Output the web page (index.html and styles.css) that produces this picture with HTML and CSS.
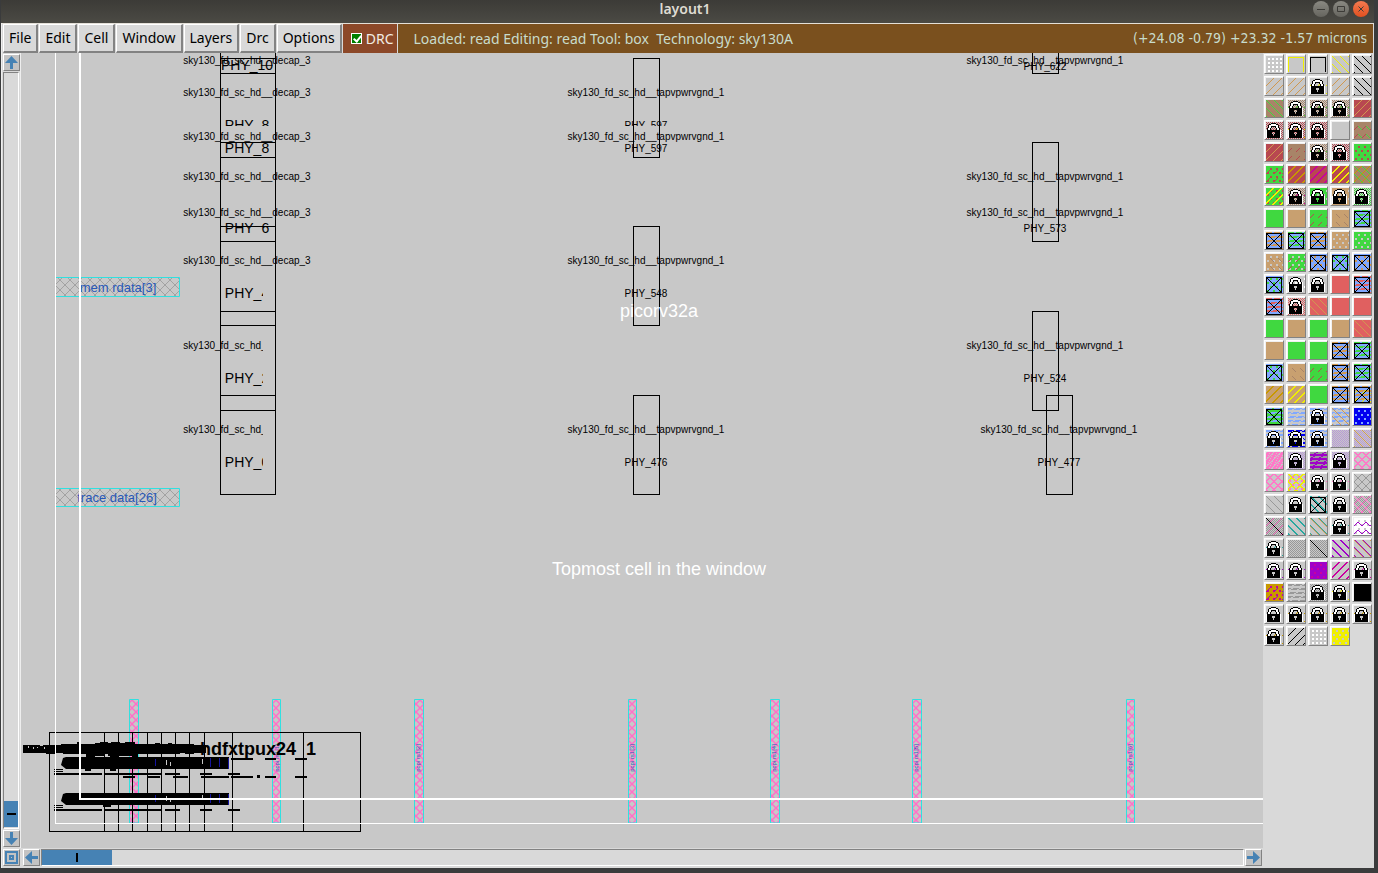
FILE: index.html
```
<!DOCTYPE html>
<html lang="en">
<head>
<meta charset="utf-8">
<title>layout1</title>
<link rel="stylesheet" href="styles.css">
</head>
<body>
<div class="window">
  <header class="titlebar">
    <span class="titlebar-side"></span>
    <h1 class="title">layout1</h1>
    <div class="titlebar-side window-controls">
      <button class="wm" aria-label="Minimize"><svg width="16" height="16" viewBox="0 0 16 16"><path d="M4 8.500h8"/></svg></button>
      <button class="wm" aria-label="Maximize"><svg width="16" height="16" viewBox="0 0 16 16"><path d="M4.500 5.500h7v5h-7z"/></svg></button>
      <button class="wm wm-close" aria-label="Close"><svg width="16" height="16" viewBox="0 0 16 16"><path d="M5.500 5.500l5 5m0-5l-5 5"/></svg></button>
    </div>
  </header>
  <div class="content">
    <nav class="menubar">
      <button class="menu">File</button>
      <button class="menu">Edit</button>
      <button class="menu">Cell</button>
      <button class="menu">Window</button>
      <button class="menu">Layers</button>
      <button class="menu">Drc</button>
      <button class="menu">Options</button>
      <label class="drc"><input class="drc-check" type="checkbox" checked>DRC</label>
      <div class="status">
        <span class="status-text">Loaded: read Editing: read Tool: box&nbsp; Technology: sky130A</span>
        <span class="status-text readout">(+24.08 -0.79) +23.32 -1.57 microns</span>
      </div>
    </nav>
    <main class="workspace">
      <div class="vscroll">
        <button class="arrow" aria-label="Scroll up"><svg width="15" height="15" viewBox="0 0 15 15"><path d="M7.500 1L14 8H9v6H6V8H1z"/></svg></button>
        <div class="trough trough-v"><div class="thumb thumb-v"></div></div>
        <button class="arrow" aria-label="Scroll down"><svg width="15" height="15" viewBox="0 0 15 15"><path d="M7.500 14L14 7H9V1H6v6H1z"/></svg></button>
      </div>
      <svg class="canvas" role="img" aria-label="Layout view">
        <defs>
          <pattern id="cross-gray" width="10" height="10" patternUnits="userSpaceOnUse"><path d="M0 0l10 10M10 0L0 10" stroke="#a2a2a2" fill="none"/></pattern>
          <pattern id="cross-pink" width="8" height="8" patternUnits="userSpaceOnUse"><path d="M0 0l8 8M8 0L0 8" stroke="#ff70c8" stroke-width="1.500" fill="none"/></pattern>
          <clipPath id="clip-left"><path d="M100 50h163v450H100z"/></clipPath>
          <clipPath id="clip-upper"><path d="M100 50h1000v76H100z"/></clipPath>
          <clipPath id="clip-phy6"><path d="M100 200h200v33H100z"/></clipPath>
        </defs>
        <g transform="translate(-21 -53)">
          <g class="pin">
            <path fill="url(#cross-gray)" d="M55.500 277.500h124v19h-124zM55.500 488.500h124v18h-124z"/>
          </g>
          <g class="pin">
            <path fill="url(#cross-pink)" d="M129.500 699.500h9V823h-9zM272.500 699.500h8V823h-8zM414.500 699.500h9V823h-9zM628.500 699.500h8V823h-8zM770.500 699.500h9V823h-9zM912.500 699.500h9V823h-9zM1126.500 699.500h8V823h-8z"/>
          </g>
          <g class="pin-label">
            <text x="118" y="292">mem rdata[3]</text>
            <text x="117" y="502">trace data[26]</text>
          </g>
          <g class="pin-tiny">
            <text transform="translate(279 758) rotate(-90)">pcpi rs1[1]</text>
            <text transform="translate(420 758) rotate(-90)">pcpi rs1[2]</text>
            <text transform="translate(634 758) rotate(-90)">pcpi rs1[3]</text>
            <text transform="translate(776 758) rotate(-90)">pcpi rs1[4]</text>
            <text transform="translate(918 758) rotate(-90)">pcpi rs1[5]</text>
            <text transform="translate(1132 758) rotate(-90)">pcpi rs1[6]</text>
          </g>
          <path class="cell-line" d="M220.500 53V494.500M275.500 53V494.500M220 58.500h55M220 73.500h55M220 142.500h55M220 157.500h55M220 226.500h55M220 241.500h55M220 311.500h55M220 325.500h55M220 395.500h55M220 410.500h55M220 494.500h55
            M633.500 58.500h26v99h-26zM633.500 226.500h26v99h-26zM633.500 395.500h26v99h-26z
            M1032.500 43.500h26v30h-26zM1032.500 142.500h26v99h-26zM1032.500 311.500h26v99h-26zM1046.500 395.500h26v99h-26z
            M49.500 732.500h311v99h-311zM104.500 732v99M118.500 732v99M132.500 732v99M147.500 732v99M161.500 732v99M175.500 732v99M189.500 732v99M204.500 732v99M232.500 732v99M303.500 732v99"/>
          <g class="cell-type">
            <text x="247" y="64">sky130_fd_sc_hd__decap_3</text>
            <text x="247" y="96">sky130_fd_sc_hd__decap_3</text>
            <text x="247" y="140">sky130_fd_sc_hd__decap_3</text>
            <text x="247" y="180">sky130_fd_sc_hd__decap_3</text>
            <text x="247" y="216">sky130_fd_sc_hd__decap_3</text>
            <text x="247" y="264">sky130_fd_sc_hd__decap_3</text>
            <g clip-path="url(#clip-left)">
              <text x="247" y="349">sky130_fd_sc_hd__decap_3</text>
              <text x="247" y="433">sky130_fd_sc_hd__decap_3</text>
            </g>
            <text x="646" y="96">sky130_fd_sc_hd__tapvpwrvgnd_1</text>
            <text x="646" y="140">sky130_fd_sc_hd__tapvpwrvgnd_1</text>
            <text x="646" y="264">sky130_fd_sc_hd__tapvpwrvgnd_1</text>
            <text x="646" y="433">sky130_fd_sc_hd__tapvpwrvgnd_1</text>
            <text x="1045" y="64">sky130_fd_sc_hd__tapvpwrvgnd_1</text>
            <text x="1045" y="180">sky130_fd_sc_hd__tapvpwrvgnd_1</text>
            <text x="1045" y="216">sky130_fd_sc_hd__tapvpwrvgnd_1</text>
            <text x="1045" y="349">sky130_fd_sc_hd__tapvpwrvgnd_1</text>
            <text x="1059" y="433">sky130_fd_sc_hd__tapvpwrvgnd_1</text>
            <g clip-path="url(#clip-upper)"><text x="646" y="129">PHY_597</text></g>
            <text x="646" y="152">PHY_597</text>
            <text x="646" y="297">PHY_548</text>
            <text x="646" y="466">PHY_476</text>
            <text x="1045" y="70">PHY_622</text>
            <text x="1045" y="232">PHY_573</text>
            <text x="1045" y="382">PHY_524</text>
            <text x="1059" y="466">PHY_477</text>
          </g>
          <g class="cell-name">
            <text x="247" y="70">PHY_10</text>
            <g clip-path="url(#clip-upper)"><text x="247" y="130">PHY_8</text></g>
            <text x="247" y="153">PHY_8</text>
            <g clip-path="url(#clip-phy6)"><text x="247" y="233">PHY_6</text></g>
            <g clip-path="url(#clip-left)">
              <text x="247" y="298">PHY_4</text>
              <text x="247" y="383">PHY_2</text>
              <text x="247" y="467">PHY_0</text>
            </g>
          </g>
          <g class="pile">
            <path d="M23 745h17v1h3v-1h18v-1h16v-2h2v2h16v-1h5v-1h8v1h3v-1h9v1h5v-1h10v2h20v-1h5v1h8v-1h4v1h22v1h12v8h-12v1h-9v-1h-5v1H63v-1h-8v1h-9v-1H23zM66 757h163v12H66l-5-4 2-7zM66 793h163v12H66l-5-4 2-7z"/>
            <path d="M86 754h18v2h4v-2h30v3h-6v-1h-14v1h-8v-1H95v1h-9zM85 769h6v2h-6zM110 769h6v2h-6zM103 805h8v2h-8z"/>
            <path d="M231 758h22v2h-22zM265 758h11v2h-11zM295 758h12v2h-12zM54 773h48v2H54zM105 773h57v2h-57zM165 773h15v2h-15zM200 773h12v2h-12zM228 773h12v2h-12zM123 776h12v2h-12zM148 776h12v2h-12zM173 776h15v2h-15zM201 776h28v2h-28zM231 776h22v2h-22zM257 775h3v3h-3zM265 776h11v2h-11zM295 776h12v2h-12zM54 809h48v2H54zM105 809h57v2h-57zM165 809h15v2h-15zM200 809h12v2h-12zM228 809h12v2h-12zM54 769h9v1h-9zM54 771h9v1h-9zM54 805h9v1h-9zM54 807h9v1h-9z"/>
            <text class="pile-text" x="296" y="755">hdfxtpux24</text>
            <text class="pile-text" x="316" y="755">1</text>
            <path fill="#c8c8c8" d="M28 746h1v2h-1zM33 747h1v2h-1zM37 747h1v1h-1zM44 747h1v2h-1zM166 760h1v5h-1zM170 762h1v4h-1zM202 759h1v5h-1zM166 796h1v5h-1zM170 798h1v4h-1zM202 795h1v5h-1z"/>
            <path fill="#1414a0" d="M155 759h1v7h-1zM210 758h1v9h-1zM219 758h1v9h-1zM228 758h1v11h-1zM155 795h1v7h-1zM210 794h1v9h-1zM219 794h1v9h-1zM228 794h1v11h-1z"/>
          </g>
          <path class="edit-box" d="M55 53h1v770h1208v1H55zM79 53h2v745h1182v2H79z"/>
          <g class="caption">
            <text x="659" y="317">picorv32a</text>
            <text x="659" y="575">Topmost cell in the window</text>
          </g>
        </g>
      </svg>
      <aside class="palette" id="palette" aria-label="Layers"></aside>
      <button class="arrow arrow-zoom" aria-label="Fit view"><svg width="15" height="15" viewBox="0 0 15 15"><path fill-rule="evenodd" d="M1 1h13v13H1zM3 3v9h9V3zM5 5h5v5H5zM7 7v1h1V7z"/></svg></button>
      <div class="hscroll">
        <button class="arrow" aria-label="Scroll left"><svg width="15" height="15" viewBox="0 0 15 15"><path d="M1 7.500L8 1v5h6v3H8v5z"/></svg></button>
        <div class="trough trough-h"><div class="thumb thumb-h"></div></div>
        <button class="arrow" aria-label="Scroll right"><svg width="15" height="15" viewBox="0 0 15 15"><path d="M14 7.500L7 1v5H1v3h6v5z"/></svg></button>
      </div>
    </main>
  </div>
</div>
<script src="palette.js"></script>
</body>
</html>
```
FILE: palette.js
```
// Each swatch: background colour code, then fill patterns as <pattern><colour>.
const COLORS = {
  '.': '#c8c8c8', g: '#40d840', t: '#d09850', b: '#a88468', r: '#b84850', R: '#e06060',
  y: '#f0f000', o: '#c89800', m: '#c800a0', p: '#ff78c8', v: '#a000c8', l: '#80a8ff',
  B: '#0000f0', w: '#ffffff', k: '#000000', c: '#28a8a0', a: '#989898', s: '#b898d8'
};
const BACKGROUNDS = { ...COLORS, t: '#c8a070' };

const ROWS = [
  ['. dw', '. fy', '. fk', '. \\y', '. \\k'],
  ['. /t', '. /t', '. -y L', '. /t', '. \\k'],
  ['b \\g', '. #b -g L', '. #b -g L', '. #b -g L', 'r /t'],
  ['. #r L', '. #r -y L', '. #r L', '.', 'b -r ~g'],
  ['r /t', 'b -r', '. #b -g L', '. #r L', 'g er'],
  ['g er -r', 'r ]o', 'r ]m', 'r ]y', 'b /o \\g'],
  ['g er ]y', '. #b -m L', 'g e. L', 't e. L', '. #g L'],
  ['g', 't', 'g -r', 't ~b', 'l hg X'],
  ['l ht X', 'l hg X', 'l ht X', 't e.', 'g e.'],
  ['t e. ~b', 'g e. -r', 'l et X', 'l eg X', 'l et X'],
  ['l eg X', '. ew L', '. L', 'R', 'l hR X'],
  ['l hR X', '. #R L', 'R \\t', 'R', 'R'],
  ['g', 't', 'g', 't', 'R \\t'],
  ['t', 'g', 'g', 'l ht X', 'l hg X'],
  ['l eg X', 't ~b', 'g -r', 'l ht X', 'l hg X'],
  ['t ]o', 't ]y', 'g', 'l ht X', 'l ht -y X'],
  ['g hl X', '. hl', '. hl L', '. hl \\t', 'B el'],
  ['. hl L', '. hB L', '. hl L', '. #s', '. #s \\t'],
  ['p n.', '. #s L', 'v ha', '. #s L', '. zp'],
  ['. zp', '. zy ep', '. -p L', '. -p L', '. xa'],
  ['. \\t \\a', '. L', '. [c X', '. L', '. #a xp'],
  ['. #a /p 1k', '. [c', '. [c \\t', '. -c L', 'w e. ~v -v'],
  ['. -c L', '. #a', '. #a 1k', '. [v', '. [v \\t'],
  ['. -v L', '. -v L', 'v em', '. ]m', '. -m L'],
  ['o em -v', '. ha', '. #a L', '. -y L', 'k'],
  ['. L', '. -o L', '. -o L', '. -o L', '. -o L'],
  ['. -o L', '. /k', '. dw', 'y e.']
];

const LOCK = [
  '',
  '.....KKKKK.......',
  '...KKWWWWWKK.....',
  '..KWWWWWWWWWK....',
  '..KWWKKKKKWWK....',
  '..KWWK...KWWK....',
  '.KWWK.....KWWK...',
  '.KWWK.....KWWK...',
  'WKKKKKKKKKKKKKW..',
  'WKKKKKKKKKKKKKW..',
  'WKKKKK...KKKKKW..',
  'WKKKKK...KKKKKW..',
  'WKKKKKK.KKKKKKW..',
  'WKKKKKK.KKKKKKW..',
  'WKKKKKKKKKKKKKW..',
  'WKKKKKKKKKKKKKW..',
  ''
];

const PATTERNS = {
  d: (x, y) => x % 4 > 1 && y % 4 > 1 && x < 16 && y < 16,
  e: (x, y) => (x + (y >> 2) % 2 * 3) % 6 > 3 && y % 4 > 1,
  '/': (x, y) => (x + y) % 8 === 7,
  '\\': (x, y) => (x - y + 32) % 8 === 0,
  ']': (x, y) => (x + y) % 8 > 5,
  '[': (x, y) => (x - y + 32) % 8 < 2,
  '-': (x, y) => (x + y) % 8 === 7 && x % 8 < 4,
  '~': (x, y) => (x - y + 32) % 8 === 0 && y % 8 > 3,
  '1': (x, y) => x === y,
  x: (x, y) => (x + y) % 8 === 7 || (x - y + 32) % 8 === 0,
  z: (x, y) => (x + y) % 8 > 5 || (x - y + 32) % 8 < 2,
  '#': (x, y) => (x + y) % 2 === 0,
  h: (x, y) => y % 4 < 2 && (x + (y >> 2) * 3 + y % 2 * 2) % 8 < 6,
  n: (x, y) => (x * x * 3 + y * y * 5 + x * y) % 7 < 1,
  f: (x, y) => (y === 1 && x < 16) || ((x === 0 || x === 15) && y > 0 && y < 16),
  X: (x, y) => y > 0 && x < 16 && (y === 1 || y === 16 || x === 0 || x === 15 || x === y - 1 || x + y === 16)
};

function pixels(test, color) {
  let d = '';
  for (let y = 0; y < 17; y++) for (let x = 0; x < 17; x++) if (test(x, y)) d += `M${x} ${y}h1v1h-1z`;
  return `<path fill="${color}" d="${d}"/>`;
}

function swatch(spec) {
  const [bg, ...layers] = spec.split(' ');
  let out = `<path fill="${BACKGROUNDS[bg]}" d="M0 0h17v17H0z"/>`;
  for (const layer of layers) {
    if (layer === 'L') {
      out += pixels((x, y) => LOCK[y][x] === 'K', '#000') + pixels((x, y) => LOCK[y][x] === 'W', '#fff');
    } else {
      out += pixels(PATTERNS[layer[0]], layer === 'X' ? '#000' : COLORS[layer[1]]);
    }
  }
  return `<svg width="17" height="17" viewBox="0 0 17 17" shape-rendering="crispEdges">${out}</svg>`;
}

document.getElementById('palette').innerHTML = ROWS.flat()
  .map((spec, i) => `<button class="swatch" aria-label="Layer ${i + 1}">${swatch(spec)}</button>`)
  .join('');
```
FILE: styles.css
```
* { box-sizing: border-box; }
html, body { height: 100%; }
body { margin: 0; background: #3a3b3c; font-family: "Noto Sans", "Open Sans", sans-serif; font-size: 14px; color: #000; }
button { margin: 0; padding: 0; border: 0; font: inherit; color: inherit; }
svg { display: block; }

.window { display: flex; flex-direction: column; height: 100vh; padding: 0 4px 5px 1px; }
.titlebar { display: flex; align-items: center; height: 23px; flex: none; background: linear-gradient(#3c3b37, #4b4a44); }
.titlebar-side { flex: 1; }
.title { margin: 0; padding-bottom: 6px; font-size: 14px; line-height: 17px; font-weight: 600; color: #dfdbd2; }
.window-controls { display: flex; justify-content: flex-end; gap: 4px; padding: 0 5px 5px 0; }
.wm { width: 16px; height: 16px; border-radius: 50%; background: linear-gradient(#8a8982, #66655f); }
.wm path { fill: none; stroke: #3c3b37; }
.wm-close { background: linear-gradient(#f47a50, #e05020); }

.content { display: flex; flex-direction: column; flex: 1; min-height: 0; background: #d9d9d9; border-left: 1px solid #eee; }
.menubar { display: flex; height: 30px; flex: none; gap: 1px; padding-left: 1px; border-top: 1px solid #e4e0d8; background: #d9d9d9; }
.menu { padding: 0 5px 1px; background: #d9d9d9; border: 1px solid #fff; border-right: 2px solid #828282; border-bottom: 2px solid #828282; line-height: 19px; }
.drc { display: flex; align-items: center; gap: 4px; padding: 0 3px 1px 8px; background: #8c4828; color: #f2ece4; }
.drc-check { appearance: none; width: 11px; height: 11px; margin: 0; border: 1px solid #fff; background: #008000; position: relative; }
.drc-check:checked::after { content: ""; position: absolute; left: 3px; top: 0; width: 3px; height: 6px; border: solid #fff; border-width: 0 2px 2px 0; transform: rotate(40deg); }
.status { display: flex; flex: 1; align-items: center; justify-content: space-between; margin-right: 1px; padding: 0 6px 1px 16px; background: #7a501e; color: #c8dccc; white-space: nowrap; }
.readout { font-family: "DejaVu Sans Condensed", "Noto Sans", sans-serif; }

.workspace { display: grid; flex: 1; min-height: 0; grid-template-columns: 19px 1fr 111px; grid-template-rows: 1fr 20px; }
.vscroll { display: flex; flex-direction: column; align-items: center; gap: 1px; padding: 1px; border-right: 1px solid #eee; }
.hscroll { display: flex; align-items: flex-start; gap: 1px; padding: 1px 1px 0 2px; }
.arrow { flex: none; width: 17px; height: 17px; border: 1px solid #fff; border-right-color: #828282; border-bottom-color: #828282; background: #c3c3c3; }
.arrow path { fill: #4682b4; }
.arrow-zoom { grid-column: 1; grid-row: 2; margin: 1px; }
.hscroll { grid-column: 2; grid-row: 2; }
.trough { display: flex; flex: 1; border: 1px solid #828282; border-right-color: #fff; border-bottom-color: #fff; background: #d9d9d9; }
.trough-v { flex-direction: column; justify-content: flex-end; width: 16px; padding-bottom: 1px; }
.trough-h { height: 17px; }
.thumb { display: flex; align-items: center; justify-content: center; background: #4682b4; }
.thumb-v { height: 26px; }
.thumb-h { width: 70px; }
.thumb::after { content: ""; background: #000; }
.thumb-v::after { width: 9px; height: 2px; }
.thumb-h::after { width: 2px; height: 9px; }

.canvas { width: 100%; height: 100%; min-width: 0; overflow: hidden; background: #c8c8c8; font-family: "Liberation Sans", Arial, sans-serif; }
.canvas text { text-anchor: middle; }
.pin { stroke: #30e0e0; }
.pin-label { font-size: 13px; fill: #2858b8; }
.pin-tiny { font-size: 6px; fill: #2858b8; }
.cell-line { fill: none; stroke: #000; shape-rendering: crispEdges; }
.cell-type { font-size: 10px; fill: #000; }
.cell-name { font-size: 14px; }
.canvas .pile-text { font-size: 18px; font-weight: 700; text-anchor: end; }
.edit-box { fill: #fff; fill-rule: evenodd; }
.caption { font-size: 18px; fill: #fff; }

.palette { display: grid; grid-row: 1 / 3; grid-column: 3; grid-template-columns: repeat(5, 20px); gap: 2px; align-content: start; padding: 1px; }
.swatch { height: 20px; padding: 1px 0 0 1px; border: 1px solid #fff; border-right-color: #828282; border-bottom-color: #828282; background: #f0f0f0; }
```
